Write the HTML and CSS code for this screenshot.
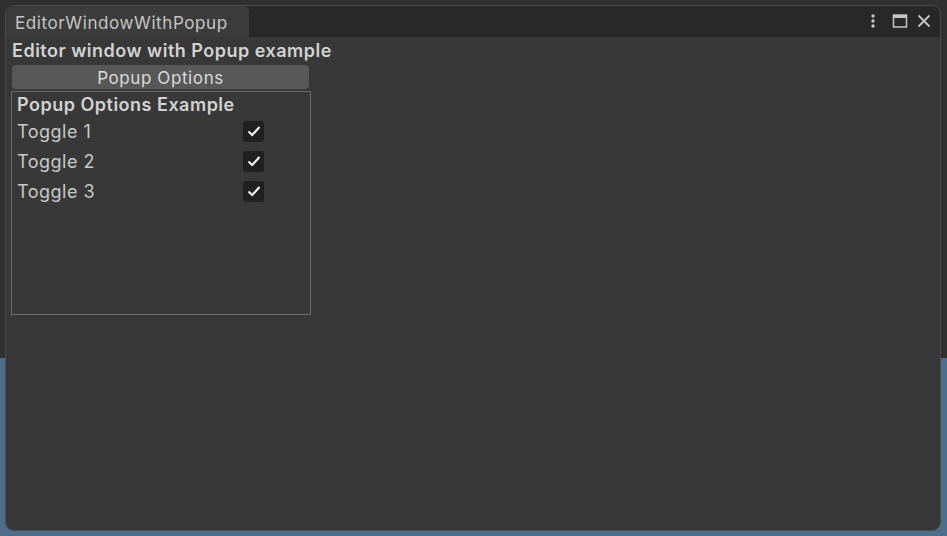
FILE: index.html
```html
<!DOCTYPE html>
<html lang="en">
<head>
    <meta charset="UTF-8">
    <title>EditorWindowWithPopup</title>
    <link rel="stylesheet" href="styles.css">
</head>
<body>
    <div class="scene">
        <div class="window">
            <div class="tabbar">
                <div class="tab">EditorWindowWithPopup</div>
                <div class="tab-tools">
                    <svg class="tool kebab" width="8" height="16" viewBox="0 0 8 16">
                        <circle cx="4" cy="3" r="1.7" fill="#c4c4c4"/>
                        <circle cx="4" cy="8" r="1.7" fill="#c4c4c4"/>
                        <circle cx="4" cy="13" r="1.7" fill="#c4c4c4"/>
                    </svg>
                    <svg class="tool" width="16" height="16" viewBox="0 0 16 16">
                        <rect x="1.5" y="2" width="13" height="12" fill="none" stroke="#c4c4c4" stroke-width="1.5"/>
                        <rect x="1.5" y="2" width="13" height="3" fill="#c4c4c4"/>
                    </svg>
                    <svg class="tool" width="16" height="16" viewBox="0 0 16 16">
                        <path d="M2.5 2.5 L13.5 13.5 M13.5 2.5 L2.5 13.5" stroke="#c4c4c4" stroke-width="1.8"/>
                    </svg>
                </div>
            </div>
            <div class="content">
                <div class="heading">Editor window with Popup example</div>
                <button class="popup-btn">Popup Options</button>
                <div class="popup">
                    <div class="popup-title">Popup Options Example</div>
                    <div class="toggle-row">
                        <span>Toggle 1</span>
                        <span class="check"><svg width="14" height="12" viewBox="0 0 14 12"><path d="M1.5 6.5 L5.2 10 L12.5 2" fill="none" stroke="#f0f0f0" stroke-width="2.2"/></svg></span>
                    </div>
                    <div class="toggle-row">
                        <span>Toggle 2</span>
                        <span class="check"><svg width="14" height="12" viewBox="0 0 14 12"><path d="M1.5 6.5 L5.2 10 L12.5 2" fill="none" stroke="#f0f0f0" stroke-width="2.2"/></svg></span>
                    </div>
                    <div class="toggle-row">
                        <span>Toggle 3</span>
                        <span class="check"><svg width="14" height="12" viewBox="0 0 14 12"><path d="M1.5 6.5 L5.2 10 L12.5 2" fill="none" stroke="#f0f0f0" stroke-width="2.2"/></svg></span>
                    </div>
                </div>
            </div>
        </div>
    </div>
</body>
</html>
```

FILE: styles.css
```css
body {
    margin: 0;
    font-family: Inter, "Noto Sans", sans-serif;
    background-color: #4d6f8c;
}
.scene {
    width: 947px;
    height: 536px;
    padding: 5px 6px 5px 5px;
    box-sizing: border-box;
    background: linear-gradient(#303030 0, #303030 358px, #4d6f8c 358px);
}
.window {
    height: 100%;
    display: flex;
    flex-direction: column;
    background-color: #383838;
    border: 1px solid #4c4c4c;
    border-radius: 9px;
    overflow: hidden;
    box-sizing: border-box;
}
.tabbar {
    height: 31px;
    background-color: #282828;
    display: flex;
    justify-content: space-between;
    flex-shrink: 0;
}
.tab {
    width: 243px;
    background-color: #3c3c3c;
    border-radius: 8px 6px 0 0;
    color: #c4c4c4;
    font-size: 17px;
    letter-spacing: 0.6px;
    padding-left: 9px;
    line-height: 35px;
    box-sizing: border-box;
}
.tab-tools {
    display: flex;
    align-items: center;
    gap: 8px;
    padding-right: 8px;
    padding-bottom: 2px;
}
.kebab {
    margin-right: 7px;
}
.content {
    flex: 1;
    padding: 3px 5px;
}
.heading {
    color: #d2d2d2;
    font-size: 18px;
    font-weight: 600;
    letter-spacing: 0.5px;
    line-height: 22px;
    padding-left: 1px;
}
.popup-btn {
    display: block;
    width: 297px;
    height: 24px;
    margin: 3px 0 2px 1px;
    background-color: #585858;
    border: none;
    border-radius: 4px;
    color: #dadada;
    font-family: inherit;
    font-size: 17px;
    letter-spacing: 0.6px;
    padding: 2px 0 0;
}
.popup {
    width: 300px;
    height: 224px;
    border: 1px solid #6a6a6a;
    box-sizing: border-box;
    padding: 1px 5px;
}
.popup-title {
    color: #d2d2d2;
    font-size: 18px;
    font-weight: 600;
    letter-spacing: 0.5px;
    line-height: 23px;
}
.toggle-row {
    display: flex;
    justify-content: space-between;
    align-items: center;
    height: 30px;
    width: 247px;
    color: #c8c8c8;
    font-size: 18px;
    letter-spacing: 0.5px;
}
.check {
    width: 21px;
    height: 21px;
    background-color: #202020;
    border-radius: 3px;
    display: flex;
    align-items: center;
    justify-content: center;
}
```
